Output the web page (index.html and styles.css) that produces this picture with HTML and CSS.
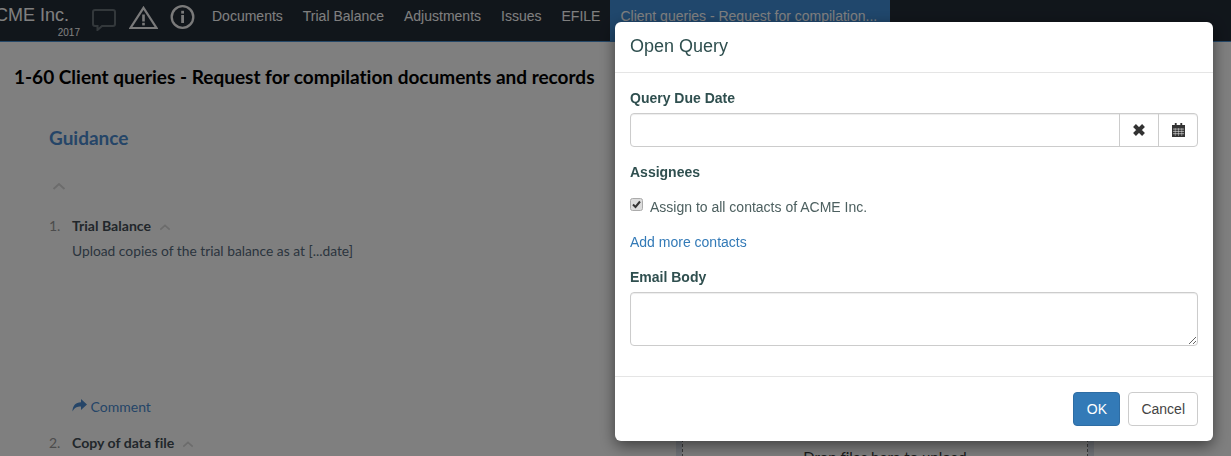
FILE: index.html
```html
<!DOCTYPE html>
<html lang="en">
<head>
    <meta charset="UTF-8">
    <title>Open Query</title>
    <link rel="stylesheet" href="styles.css">
</head>
<body>
    <nav class="topbar">
        <div class="brand">
            <span class="brand-name">ACME Inc.</span>
            <span class="brand-year">2017</span>
        </div>
        <div class="top-icons">
            <svg class="icon-chat" width="24" height="22" viewBox="0 0 24 22"><path d="M3 1h18a2 2 0 0 1 2 2v12a2 2 0 0 1-2 2H10l-4.500 4v-4H3a2 2 0 0 1-2-2V3a2 2 0 0 1 2-2z" fill="none" stroke="#667077" stroke-width="2"/></svg>
            <svg class="icon-warn" width="29" height="23" viewBox="0 0 29 23"><path d="M14.500 1.800 27.500 22H1.500Z" fill="none" stroke="#f4f4f4" stroke-width="2.200"/><rect x="13.200" y="8.500" width="2.600" height="7" fill="#f4f4f4"/><rect x="13.200" y="16.800" width="2.600" height="2.600" fill="#f4f4f4"/></svg>
            <svg class="icon-info" width="25" height="24" viewBox="0 0 25 24"><circle cx="12.500" cy="12" r="10.800" fill="none" stroke="#f4f4f4" stroke-width="2.300"/><rect x="11.200" y="10" width="2.800" height="8" fill="#f4f4f4"/><rect x="11.200" y="5.800" width="2.800" height="2.800" fill="#f4f4f4"/></svg>
        </div>
        <ul class="nav-links">
            <li>Documents</li>
            <li>Trial Balance</li>
            <li>Adjustments</li>
            <li>Issues</li>
            <li>EFILE</li>
            <li class="active">Client queries - Request for compilation...</li>
        </ul>
    </nav>

    <main class="page">
        <h1 class="page-title">1-60 Client queries - Request for compilation documents and records</h1>
        <div class="columns">
            <section class="guidance">
                <h2>Guidance</h2>
                <svg class="chev chev-top" width="14" height="8" viewBox="0 0 14 8"><path d="M1.500 7 7 2l5.500 5" fill="none" stroke="#d8d8d8" stroke-width="2"/></svg>
                <div class="item">
                    <span class="num">1.</span>
                    <div class="item-body">
                        <div class="item-head">Trial Balance
                            <svg class="chev" width="12" height="8" viewBox="0 0 14 8"><path d="M1.500 7 7 2l5.500 5" fill="none" stroke="#d8d8d8" stroke-width="2"/></svg>
                        </div>
                        <p>Upload copies of the trial balance as at [...date]</p>
                        <a class="comment">
                            <svg width="15" height="13" viewBox="0 0 15 13"><path d="M9 0l6 5.500L9 11V7.500C5 7.500 2.500 8.500.5 12.500.5 7 3.500 3.500 9 3.300z" fill="#4a8bd0"/></svg>
                            Comment</a>
                    </div>
                </div>
                <div class="item">
                    <span class="num">2.</span>
                    <div class="item-body">
                        <div class="item-head">Copy of data file
                            <svg class="chev" width="12" height="8" viewBox="0 0 14 8"><path d="M1.500 7 7 2l5.500 5" fill="none" stroke="#d8d8d8" stroke-width="2"/></svg>
                        </div>
                    </div>
                </div>
            </section>
            <aside class="side-panel">
                <div class="drop-zone">Drop files here to upload</div>
            </aside>
        </div>
    </main>

    <div class="backdrop"></div>

    <div class="modal">
        <header class="modal-header">Open Query</header>
        <div class="modal-body">
            <label class="field-label">Query Due Date</label>
            <div class="input-group">
                <input class="text-input" type="text">
                <button class="addon" type="button">
                    <svg width="14" height="14" viewBox="0 0 14 14"><path d="M2.500 2.500 11.500 11.500M11.500 2.500 2.500 11.500" stroke="#333" stroke-width="4"/></svg>
                </button>
                <button class="addon" type="button">
                    <svg width="13" height="14" viewBox="0 0 14 15"><path d="M3 0h2v2h4V0h2v2h3v13H0V2h3z" fill="#333"/><path d="M1 6.500h12M1 9h12M1 11.500h12" stroke="#fff" stroke-width=".6"/><path d="M3.500 5.500v8.500M7 5.500v8.500M10.500 5.500v8.500" stroke="#fff" stroke-width=".4"/></svg>
                </button>
            </div>
            <label class="field-label assignees">Assignees</label>
            <label class="check-row">
                <svg class="check-box" width="13" height="13" viewBox="0 0 13 13"><rect x=".5" y=".5" width="12" height="12" rx="2" fill="#dcdcdc" stroke="#ababab"/><path d="M3 6.500l2.500 2.500L10 3.500" fill="none" stroke="#333" stroke-width="2"/></svg>
                <span>Assign to all contacts of ACME Inc.</span>
            </label>
            <a class="add-link">Add more contacts</a>
            <label class="field-label email">Email Body</label>
            <textarea class="text-area"></textarea>
        </div>
        <footer class="modal-footer">
            <button class="btn btn-primary" type="button">OK</button>
            <button class="btn btn-default" type="button">Cancel</button>
        </footer>
    </div>
</body>
</html>
```

FILE: styles.css
```css
html, body {
    height: 456px;
}

body {
    margin: 0;
    overflow: hidden;
    background-color: #fff;
    font-family: 'Lato', sans-serif;
    font-size: 14px;
    color: #333;
    font-variant-ligatures: none;
}

.topbar {
    display: flex;
    height: 41px;
    background-color: #232c37;
    border-bottom: 1px solid #4a90d0;
    overflow: hidden;
    font-family: 'Liberation Sans', sans-serif;
}

.brand {
    position: relative;
    flex: none;
    width: 97px;
    margin-left: -17px;
    color: #fff;
}

.brand-name {
    display: block;
    margin-top: 5px;
    font-size: 18px;
    white-space: nowrap;
}

.brand-year {
    position: absolute;
    top: 27px;
    right: 0;
    font-size: 10px;
}

.top-icons {
    display: flex;
    align-items: flex-start;
    gap: 13px;
    margin-left: 12px;
}

.icon-chat {
    margin-top: 9px;
}

.icon-warn {
    margin-top: 6px;
}

.icon-info {
    margin: 5px 0 0 -1px;
}

.nav-links {
    display: flex;
    margin: 0 0 0 7px;
    padding: 0;
    list-style: none;
    font-size: 14px;
    color: #fff;
}

.nav-links li {
    padding: 8px 10px 0;
    white-space: nowrap;
}

.nav-links .active {
    padding-right: 13px;
    background-color: #408ed8;
}

.page {
    height: 414px;
    overflow: hidden;
}

.page-title {
    margin: 23px 0 0 14px;
    font-size: 19px;
    font-weight: 700;
    color: #000;
}

.columns {
    display: flex;
}

.guidance {
    flex: none;
    width: 560px;
    margin-left: 49px;
}

.guidance h2 {
    margin: 38px 0 0;
    font-size: 19px;
    font-weight: 700;
    color: #4a8bd0;
}

.chev-top {
    display: block;
    margin: 33px 0 0 3px;
}

.item {
    display: flex;
}

.item + .item {
    margin-top: 19px;
}

.num {
    width: 23px;
    color: #999;
}

.chev-top + .item {
    margin-top: 27px;
}

.item-head {
    font-size: 14.1px;
    font-weight: 700;
    color: #444e56;
}

.item-head .chev {
    margin-left: 4px;
}

.item-body p {
    margin: 8px 0 0;
    font-size: 13.8px;
    color: #566a7c;
}

.comment {
    display: block;
    margin-top: 139px;
    color: #4a8bd0;
}

.side-panel {
    flex: none;
    box-sizing: border-box;
    width: 418px;
    height: 500px;
    margin-left: 67px;
    border: solid #e0e6f0;
    border-width: 0 6px;
    outline: 1px dashed #777;
    outline-offset: -7px;
}

.drop-zone {
    margin-top: 360px;
    font-size: 15px;
    text-align: center;
    color: #333;
}

.backdrop {
    position: fixed;
    inset: 0;
    background-color: rgba(0, 0, 0, 0.5);
}

.modal {
    position: fixed;
    top: 22px;
    left: 615px;
    width: 598px;
    height: 419px;
    background-color: #fff;
    border-radius: 6px;
    box-shadow: 0 5px 15px rgba(0, 0, 0, 0.5);
    font-family: 'Liberation Sans', sans-serif;
    color: #2f4f4f;
}

.modal-header {
    height: 50px;
    padding-left: 15px;
    line-height: 48px;
    font-size: 18px;
    border-bottom: 1px solid #e5e5e5;
}

.modal-body {
    display: flex;
    flex-direction: column;
    height: 303px;
    padding: 0 15px;
    border-bottom: 1px solid #e5e5e5;
}

.field-label {
    margin-top: 17px;
    font-size: 14px;
    font-weight: 700;
    line-height: 17px;
}

.input-group {
    display: flex;
    box-sizing: border-box;
    height: 34px;
    margin-top: 6px;
    border: 1px solid #ccc;
    border-radius: 4px;
    box-shadow: inset 0 1px 1px rgba(0, 0, 0, 0.075);
}

.text-input {
    flex: 1;
    min-width: 0;
    border: 0;
    padding: 0;
    background: transparent;
}

.addon {
    display: flex;
    align-items: center;
    justify-content: center;
    width: 39px;
    padding: 0;
    border: 0;
    border-left: 1px solid #ccc;
    background: transparent;
}

.assignees {
    margin-top: 17px;
}

.check-row {
    display: flex;
    align-items: flex-start;
    gap: 7px;
    margin-top: 16px;
    line-height: 20px;
    color: #4d6060;
}

.check-box {
    flex: none;
    margin-top: 1px;
}

.add-link {
    margin-top: 15px;
    line-height: 20px;
    color: #337ab7;
}

.email {
    margin-top: 17px;
}

.text-area {
    box-sizing: border-box;
    height: 54px;
    margin-top: 6px;
    padding: 0;
    border: 1px solid #ccc;
    border-radius: 4px;
    box-shadow: inset 0 1px 1px rgba(0, 0, 0, 0.075);
}

.modal-footer {
    display: flex;
    justify-content: flex-end;
    gap: 8px;
    padding: 15px;
}

.btn {
    height: 34px;
    padding: 0 12px;
    border: 1px solid #ccc;
    border-radius: 4px;
    font-family: inherit;
    font-size: 14px;
}

.btn-primary {
    width: 47px;
    background-color: #337ab7;
    border-color: #2e6da4;
    color: #fff;
}

.btn-default {
    background-color: #fff;
    color: #444;
}
```
